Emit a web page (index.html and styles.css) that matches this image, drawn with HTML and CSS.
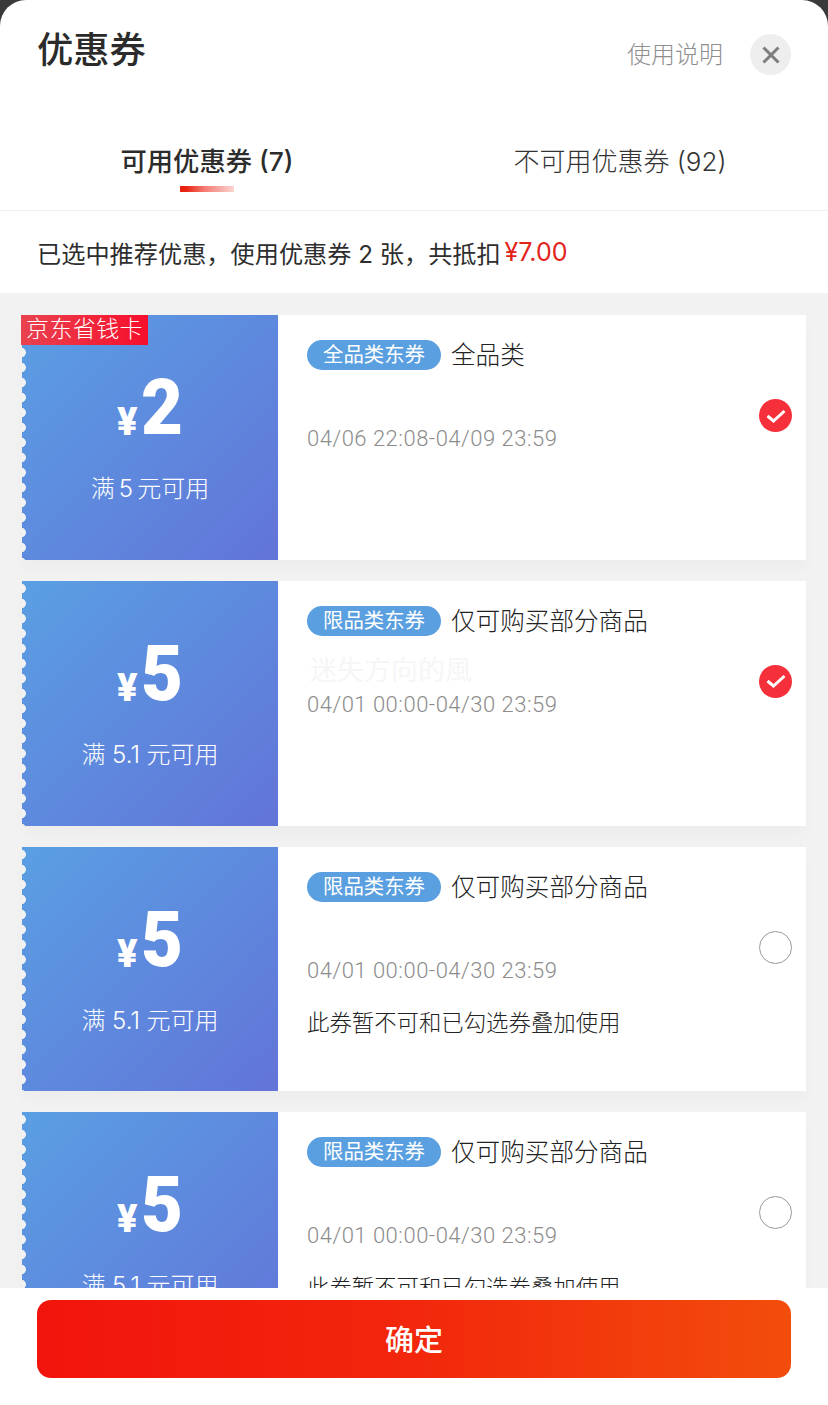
FILE: index.html
```html
<!DOCTYPE html>
<html lang="zh">
<head>
<meta charset="utf-8">
<title>优惠券</title>
<link rel="stylesheet" href="styles.css">
</head>
<body>
<div class="sheet">
  <header class="head">
    <h1 class="head-title">优惠券</h1>
    <div class="head-side">
      <span class="help">使用说明</span>
      <span class="close"><svg width="20" height="20" viewBox="0 0 20 20"><path d="M2.500 2.500L17.500 17.500M17.500 2.500L2.500 17.500" stroke="#7d7d7d" stroke-width="3" fill="none"/></svg></span>
    </div>
  </header>
  <nav class="tabs">
    <div class="tab tab-on">可用优惠券 (7)<i class="tab-bar"></i></div>
    <div class="tab tab-off">不可用优惠券 (92)</div>
  </nav>
  <div class="summary">已选中推荐优惠，使用优惠券 2 张，共抵扣 <em class="price">¥7.00</em></div>
  <main class="list">
    <article class="card">
      <span class="saver">京东省钱卡</span>
      <div class="face"><i class="edge"></i>
        <div class="amount"><span class="yen">¥</span><span class="num">2</span></div>
        <div class="rule rule-tight">满 5 元可用</div>
      </div>
      <div class="info">
        <div class="body">
          <div class="line"><span class="tag">全品类东券</span><span class="name">全品类</span></div>
          <div class="date">04/06 22:08-04/09 23:59</div>
        </div>
        <span class="check"><svg width="20" height="16" viewBox="0 0 20 16"><path d="M1.500 8L7.500 13L18.500 3" stroke="#fff" stroke-width="3" fill="none"/></svg></span>
      </div>
    </article>
    <article class="card">
      <div class="face"><i class="edge edge-full"></i>
        <div class="amount"><span class="yen">¥</span><span class="num">5</span></div>
        <div class="rule">满 5.1 元可用</div>
      </div>
      <div class="info">
        <span class="mark">迷失方向的風</span>
        <div class="body">
          <div class="line"><span class="tag">限品类东券</span><span class="name">仅可购买部分商品</span></div>
          <div class="date">04/01 00:00-04/30 23:59</div>
        </div>
        <span class="check"><svg width="20" height="16" viewBox="0 0 20 16"><path d="M1.500 8L7.500 13L18.500 3" stroke="#fff" stroke-width="3" fill="none"/></svg></span>
      </div>
    </article>
    <article class="card">
      <div class="face"><i class="edge edge-full"></i>
        <div class="amount"><span class="yen">¥</span><span class="num">5</span></div>
        <div class="rule">满 5.1 元可用</div>
      </div>
      <div class="info">
        <div class="body">
          <div class="line"><span class="tag">限品类东券</span><span class="name">仅可购买部分商品</span></div>
          <div class="date">04/01 00:00-04/30 23:59</div>
          <div class="note">此券暂不可和已勾选券叠加使用</div>
        </div>
        <span class="radio"></span>
      </div>
    </article>
    <article class="card">
      <div class="face"><i class="edge edge-full"></i>
        <div class="amount"><span class="yen">¥</span><span class="num">5</span></div>
        <div class="rule">满 5.1 元可用</div>
      </div>
      <div class="info">
        <div class="body">
          <div class="line"><span class="tag">限品类东券</span><span class="name">仅可购买部分商品</span></div>
          <div class="date">04/01 00:00-04/30 23:59</div>
          <div class="note">此券暂不可和已勾选券叠加使用</div>
        </div>
        <span class="radio"></span>
      </div>
    </article>
  </main>
  <footer class="foot"><button class="ok">确定</button></footer>
</div>
</body>
</html>
```
FILE: styles.css
```css
* { box-sizing: border-box; }
html, body { margin: 0; height: 100%; }
body {
  background: #3a3a3a;
  font-family: "Inter", "Noto Sans CJK SC", sans-serif;
  color: #2c2c2c;
  overflow: hidden;
}
.sheet {
  height: 1405px;
  width: 828px;
  background: #fff;
  border-radius: 26px 26px 0 0;
  display: flex;
  flex-direction: column;
  overflow: hidden;
}
.head {
  height: 110px;
  padding: 29px 37px 0 37px;
  display: flex;
  justify-content: space-between;
  align-items: flex-start;
  flex: none;
}
.head-title {
  margin: 0;
  font-size: 36.300px;
  line-height: 42px;
  font-weight: 500;
  color: #2b2b2b;
}
.head-side {
  display: flex;
  align-items: center;
  gap: 27px;
  margin-top: 5px;
}
.help { font-size: 24px; font-weight: 300; color: #8f8f8f; line-height: 40px; }
.close {
  width: 41px;
  height: 41px;
  border-radius: 50%;
  background: #eeeeee;
  display: flex;
  align-items: center;
  justify-content: center;
}
.tabs {
  height: 101px;
  flex: none;
  display: flex;
  border-bottom: 1px solid #f0f0f0;
}
.tab {
  width: 414px;
  text-align: center;
  font-size: 26px;
  line-height: 32px;
  padding-top: 36px;
  font-weight: 300;
  color: #333;
  display: flex;
  flex-direction: column;
  align-items: center;
}
.tab-on { font-weight: 500; color: #2c2c2c; font-size: 26.300px; }
.tab-off { width: 412px; }
.tab-bar {
  display: block;
  width: 54px;
  height: 6px;
  margin-top: 8px;
  background: linear-gradient(90deg, #e8220f 0, #e8220f 10%, #f47a72 45%, #fbd5d2 100%);
}
.summary {
  height: 82px;
  flex: none;
  padding: 0 37px;
  display: flex;
  align-items: center;
  white-space: pre;
  font-size: 24.200px;
  font-weight: 400;
  color: #2e2e2e;
}
.price { font-style: normal; font-size: 25px; color: #e2231a; margin-left: -3px; }
.list {
  flex: 1;
  min-height: 0;
  overflow: hidden;
  background: #f2f2f2;
  padding: 22px 22px 0;
  display: flex;
  flex-direction: column;
  gap: 21px;
}
.card {
  flex: none;
  height: 244.800px;
  width: 784px;
  display: flex;
  position: relative;
  box-shadow: 0 10px 14px rgba(0, 0, 0, 0.025);
}
.saver {
  position: absolute;
  left: -1px;
  top: 0;
  width: 127px;
  height: 30px;
  text-align: center;
  font-size: 23px;
  line-height: 29px;
  font-weight: 300;
  letter-spacing: 0.400px;
  color: #fff;
  background: linear-gradient(90deg, #e9424f, #f70f2c);
  z-index: 2;
}
.face {
  width: 256px;
  flex: none;
  position: relative;
  background: linear-gradient(135deg, #5a9fe3 0%, #6274d8 100%);
  color: #fff;
  display: flex;
  flex-direction: column;
  align-items: center;
}
.edge {
  position: absolute;
  left: 0;
  top: 30px;
  bottom: 0;
  width: 5px;
  background: radial-gradient(circle at -1px 50%, #f2f2f2 0, #f2f2f2 4.500px, rgba(242, 242, 242, 0) 5.200px) 0 0 / 5px 15px repeat-y;
}
.edge-full { top: 0; }
.amount {
  height: 70px;
  margin-top: 58px;
  display: flex;
  align-items: flex-end;
  line-height: 1;
  font-family: "Roboto", sans-serif;
  font-weight: 900;
}
.yen { font-size: 38px; line-height: 36px; margin-bottom: 3px; }
.num {
  display: inline-block;
  font-size: 77px;
  line-height: 70px;
  letter-spacing: -3px;
  margin-left: 4px;
  transform: scaleX(0.94);
  transform-origin: left center;
}
.rule {
  margin-top: 31px;
  font-size: 24px;
  line-height: 30px;
  font-weight: 300;
  white-space: pre;
}
.rule-tight { word-spacing: -2.500px; }
.info {
  flex: 1;
  background: #fff;
  display: flex;
  justify-content: space-between;
  padding: 25px 14px 0 29px;
  position: relative;
}
.mark {
  position: absolute;
  left: 32px;
  top: 74px;
  font-size: 27px;
  line-height: 32px;
  color: #f6f6f6;
}
.line { display: flex; align-items: center; height: 30px; }
.tag {
  width: 134px;
  height: 30px;
  border-radius: 15px;
  background: #5a9fe0;
  color: #fff;
  text-align: center;
  font-size: 20.400px;
  line-height: 30px;
  font-weight: 400;
}
.name { margin-left: 10px; font-size: 24.600px; line-height: 30px; font-weight: 300; color: #222; }
.date {
  margin-top: 54px;
  font-family: "Roboto", sans-serif;
  font-weight: 300;
  font-size: 22px;
  line-height: 30px;
  color: #8c8c8c;
  letter-spacing: 0.500px;
}
.note {
  margin-top: 22px;
  font-size: 22.400px;
  line-height: 30px;
  font-weight: 300;
  color: #222;
}
.check, .radio {
  width: 33px;
  height: 33px;
  border-radius: 50%;
  margin-top: 59px;
  flex: none;
}
.check {
  background: #f5303a;
  display: flex;
  align-items: center;
  justify-content: center;
}
.radio { border: 1px solid #999; background: #fff; }
.foot {
  height: 117px;
  flex: none;
  background: #fff;
  padding: 12px 37px 0;
  position: relative;
}
.ok {
  display: block;
  width: 100%;
  height: 78px;
  border: 0;
  padding: 0 0 3px;
  border-radius: 14px;
  background: linear-gradient(90deg, #f2140c 0%, #f2270c 50%, #f24d0c 100%);
  color: #fff;
  font-family: inherit;
  font-size: 29px;
  font-weight: 500;
}
```
